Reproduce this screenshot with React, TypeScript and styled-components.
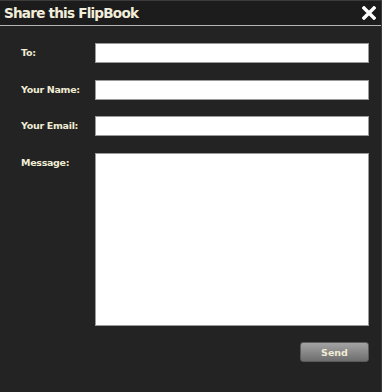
import styled, { createGlobalStyle } from "styled-components";

const GlobalStyle = createGlobalStyle`
	html, body {
		margin: 0;
		padding: 0;
		background: #222222;
	}
`;

const Panel = styled.div`
	width: 382px;
	height: 392px;
	background-color: #232323;
	box-sizing: border-box;
	border-right: 1px solid #3a3a3a;
	font-family: "DejaVu Sans", Verdana, sans-serif;
	display: flex;
	flex-direction: column;
`;

const Header = styled.div`
	height: 26px;
	box-sizing: border-box;
	background-color: #1c1c1c;
	border-top: 1px solid #3c3c3c;
	border-bottom: 1px solid #b4b4b4;
	display: flex;
	align-items: center;
	justify-content: space-between;
	padding: 0 5px 0 4px;
`;

const Title = styled.h1`
	margin: 0;
	font-size: 13.6px;
	font-weight: bold;
	color: #f2eedb;
	letter-spacing: -0.8px;
`;

const Close = styled.button`
	border: none;
	background: none;
	padding: 0;
	width: 14px;
	height: 14px;
	display: flex;
	cursor: pointer;
`;

const Form = styled.form`
	display: grid;
	grid-template-columns: 74px 274px;
	padding: 17px 0 0 21px;
	row-gap: 16.5px;
`;

const Label = styled.label`
	font-size: 9.5px;
	font-weight: bold;
	color: #f0ecd4;
	letter-spacing: -0.3px;
	padding-top: 4px;
`;

const Field = styled.input`
	box-sizing: border-box;
	width: 274px;
	height: 20px;
	border: 1px solid #9a9a9a;
	background: #ffffff;
	margin: 0;
	outline: none;
`;

const Message = styled.textarea`
	box-sizing: border-box;
	width: 274px;
	height: 173px;
	border: 1px solid #9a9a9a;
	background: #ffffff;
	margin: 0;
	resize: none;
	outline: none;
`;

const Actions = styled.div`
	grid-column: 2;
	display: flex;
	justify-content: flex-end;
`;

const SendButton = styled.button`
	width: 69px;
	height: 20px;
	border: 1px solid #5a5a5a;
	border-radius: 3px;
	background: linear-gradient(#a3a3a3, #6e6e6e);
	color: #f0ecd4;
	font-family: "DejaVu Sans", Verdana, sans-serif;
	font-size: 9.5px;
	font-weight: bold;
	padding: 0;
	cursor: pointer;
`;

const App = () => {
	return (
		<>
			<GlobalStyle />
			<Panel>
				<Header>
					<Title>Share this FlipBook</Title>
					<Close aria-label="Close">
						<svg width="14" height="14" viewBox="0 0 14 14">
							<path
								d="M2 2 L12 12 M12 2 L2 12"
								stroke="#ffffff"
								strokeWidth="3.4"
								strokeLinecap="square"
							/>
						</svg>
					</Close>
				</Header>
				<Form onSubmit={(e) => e.preventDefault()}>
					<Label>To:</Label>
					<Field type="text" name="to" />
					<Label>Your Name:</Label>
					<Field type="text" name="name" />
					<Label>Your Email:</Label>
					<Field type="text" name="email" />
					<Label>Message:</Label>
					<Message name="message" />
					<Actions>
						<SendButton type="submit">Send</SendButton>
					</Actions>
				</Form>
			</Panel>
		</>
	);
};

export default App;
